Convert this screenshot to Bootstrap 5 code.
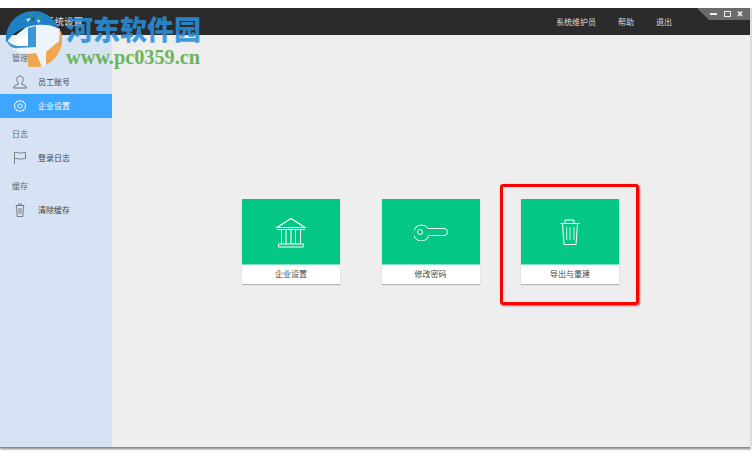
<!DOCTYPE html>
<html lang="zh">
<head>
<meta charset="utf-8">
<title>系统设置</title>
<link href="https://cdn.jsdelivr.net/npm/bootstrap@5.3.0/dist/css/bootstrap.min.css" rel="stylesheet">
<style>
html,body{height:100%}
body{background:#fff;font-family:"Noto Sans CJK SC","Liberation Sans",sans-serif;font-size:8px;color:#444;overflow:hidden;position:relative}
.app-win{width:750px;height:439px;margin-top:8px;background:#eee;box-shadow:2px 0 0 #dcdcdc,0 1.5px 0 #8a8a8a,1px 3px 1px #ccc}
.title-bar{height:27px;background:#2b2b2b;color:#e8e8e8;position:relative}
.win-title{margin-left:45px;font-size:9.5px;margin-top:-1px}
.top-item{font-size:8px;color:#ddd;line-height:1;margin-top:1px}
.top-links{margin-left:auto;gap:22px;padding-right:78px}
.win-ctl{position:absolute;right:0;top:0;width:53px;height:12px;background:#6b6b6b;clip-path:polygon(0 0,100% 0,100% 100%,12px 100%)}
.win-ctl svg{position:absolute;left:0;top:0}
.side-bar{width:112px;background:#d6e3f4;padding-top:7px}
.side-label{padding:8px 0 4px 12px;height:28px;line-height:16px;font-size:8px;color:#666}
.side-row{height:24px;padding-left:13px;color:#444}
.side-row svg{width:14px;height:14px;margin-right:11px;flex:none}
.side-row.is-on{background:#3ea6ff;color:#fff}
.work-area{padding:1px 1px 0 0}
.tile{width:98px;height:85px;background:#fff;box-shadow:0 1px 1px #b5b5b5;position:relative}
.tile-top{height:66px;background:#05c785;border-bottom:1px solid #7fe3c0}
.tile-cap{height:19px;padding-bottom:2px;color:#444;font-size:8px}
.tile-row{gap:41.5px}
.red-mark{position:absolute;left:-21px;top:-15.500px;width:139px;height:121px;border:3px solid #f00;border-radius:3px;box-shadow:1px 1px 2px #777;pointer-events:none}
.wm{position:absolute;left:0;top:0;width:230px;height:80px;pointer-events:none}
.wm-cn{position:absolute;left:66px;top:10px;font-family:"Noto Sans CJK SC",sans-serif;font-weight:900;font-size:27px;line-height:38px;color:#2a8fd8;opacity:.88;white-space:nowrap}
.wm-en{position:absolute;left:66px;top:47px;font-family:"Liberation Serif",serif;font-weight:700;font-size:20.300px;line-height:20px;color:#5cb04f;opacity:.9;white-space:nowrap}
.wm svg{position:absolute;left:6px;top:11px}
</style>
</head>
<body>
<div class="app-win d-flex flex-column">
  <div class="title-bar d-flex align-items-center">
    <div class="win-title">系统设置</div>
    <div class="top-links d-flex align-items-center">
      <span class="top-item">系统维护员</span>
      <span class="top-item">帮助</span>
      <span class="top-item">退出</span>
    </div>
    <div class="win-ctl">
      <svg width="53" height="12" viewBox="0 0 53 12" fill="none" stroke="#eee">
        <path d="M13 6h7" stroke-width="2"/>
        <rect x="27.500" y="3.500" width="6" height="5" stroke-width="1"/>
        <path d="M41 3.500l4 4.500M45 3.500l-4 4.500" stroke-width="1.600"/>
      </svg>
    </div>
  </div>
  <div class="d-flex flex-grow-1">
    <nav class="side-bar">
      <div class="side-label">管理</div>
      <div class="side-row d-flex align-items-center">
        <svg viewBox="0 0 14 14" fill="none" stroke="#555" stroke-width=".8"><path d="M7 1c-2 0-3.200 1.500-3.200 3.500 0 1.500.7 2.800 1.500 3.500v1.200L1 11.200V13h12v-1.800L8.700 9.200V8c.8-.7 1.500-2 1.500-3.500C10.200 2.500 9 1 7 1z"/></svg>
        <span>员工账号</span>
      </div>
      <div class="side-row is-on d-flex align-items-center">
        <svg viewBox="0 0 14 14" fill="none" stroke="#fff" stroke-width=".9"><path d="M7 1l1.300 1.500 2-.3.6 1.900 1.800 1-.7 1.900.7 1.900-1.800 1-.6 1.900-2-.3L7 13l-1.300-1.500-2 .3-.6-1.900-1.800-1L2 7 1.300 5.100l1.800-1 .6-1.900 2 .3z"/><circle cx="7" cy="7" r="2.200"/></svg>
        <span>企业设置</span>
      </div>
      <div class="side-label">日志</div>
      <div class="side-row d-flex align-items-center">
        <svg viewBox="0 0 14 14" fill="none" stroke="#666" stroke-width=".8"><path d="M1.500 13V1.500c2-.8 3.500.6 5.500.6s3-.6 5.500-.6V7.500c-2.500 0-3.500.6-5.500.6s-3.500-1.200-5.500-.4"/></svg>
        <span>登录日志</span>
      </div>
      <div class="side-label">缓存</div>
      <div class="side-row d-flex align-items-center">
        <svg viewBox="0 0 14 14" fill="none" stroke="#666" stroke-width=".8"><path d="M2.500 2.500h9M5.500 2.500V1h3v1.500M3.500 2.500l.6 11h5.800l.6-11M6 5v6M8 5v6"/></svg>
        <span>清除缓存</span>
      </div>
    </nav>
    <main class="work-area flex-grow-1 d-flex align-items-center justify-content-center">
      <div class="tile-row d-flex">
        <div class="tile">
          <div class="tile-top d-flex align-items-center justify-content-center">
            <svg width="32" height="32" viewBox="0 0 32 32" fill="none" stroke="#fff" stroke-width="1"><path d="M16 2.500L2 11.500h28zM2 13.500h28" stroke-width="1.200"/><path d="M6.500 14v14M25.500 14v14M11 14v14M16 14v14M20.500 14v14"/><path d="M3.500 28h25v3h-25z"/></svg>
          </div>
          <div class="tile-cap d-flex align-items-center justify-content-center">企业设置</div>
        </div>
        <div class="tile">
          <div class="tile-top d-flex align-items-center justify-content-center">
            <svg width="34" height="18" viewBox="0 0 34 18" fill="none" stroke="#fff" stroke-width="1"><path d="M14 5.500H30a3.500 3.500 0 0 1 0 7H15A8 8 0 1 1 14 5.500z"/><circle cx="6" cy="9" r="2.500"/></svg>
          </div>
          <div class="tile-cap d-flex align-items-center justify-content-center">修改密码</div>
        </div>
        <div class="tile">
          <div class="tile-top d-flex align-items-center justify-content-center">
            <svg width="20" height="26" viewBox="0 0 20 26" fill="none" stroke="#fff" stroke-width="1"><path d="M.5 4.500h19M5 4.500V1h9v3.500M2.500 4.500L4 25.500h12l1.500-21"/><path d="M6.700 8v13M10 8v13M14 8v13" opacity=".8"/></svg>
          </div>
          <div class="tile-cap d-flex align-items-center justify-content-center">导出与重建</div>
          <div class="red-mark"></div>
        </div>
      </div>
    </main>
  </div>
</div>
<div class="wm">
  <svg width="56" height="56" viewBox="0 0 56 56">
    <path d="M55 20A28 28 0 0 1 22 55.500L22 40z" fill="#f0a550"/>
    <path d="M3 30C6 42 18 44 30 42L36 56 40 54V41L53 30 54 18 30 8z" fill="#eef4fb"/>
    <path d="M28 0C12 0 0 12 0 28c0 2 .2 3 .5 4C4 24 14 16 31 14 38 13 46 14 53 17 48 7 39 0 28 0z" fill="#1f80c4"/>
    <path d="M1 29c1 6 6 9 11 8l18-1V15l-8 2v18H14C9 35 4 33 1 29z" fill="#3c96d6"/>
    <path d="M9 29l13-7v13H12z" fill="#fff"/>
    <path d="M27 6l-4-1 1-3 3 3zM30 7l4-3 1 3z" fill="#2e9a6a"/>
    <path d="M25 7l-5 1 2 3zM31 8l4 2-3 2z" fill="#cfe3f3"/>
    <circle cx="27" cy="8" r="1.800" fill="#1a5f96"/>
  </svg>
  <div class="wm-cn">河东软件园</div>
  <div class="wm-en">www.pc0359.cn</div>
</div>
</body>
</html>
